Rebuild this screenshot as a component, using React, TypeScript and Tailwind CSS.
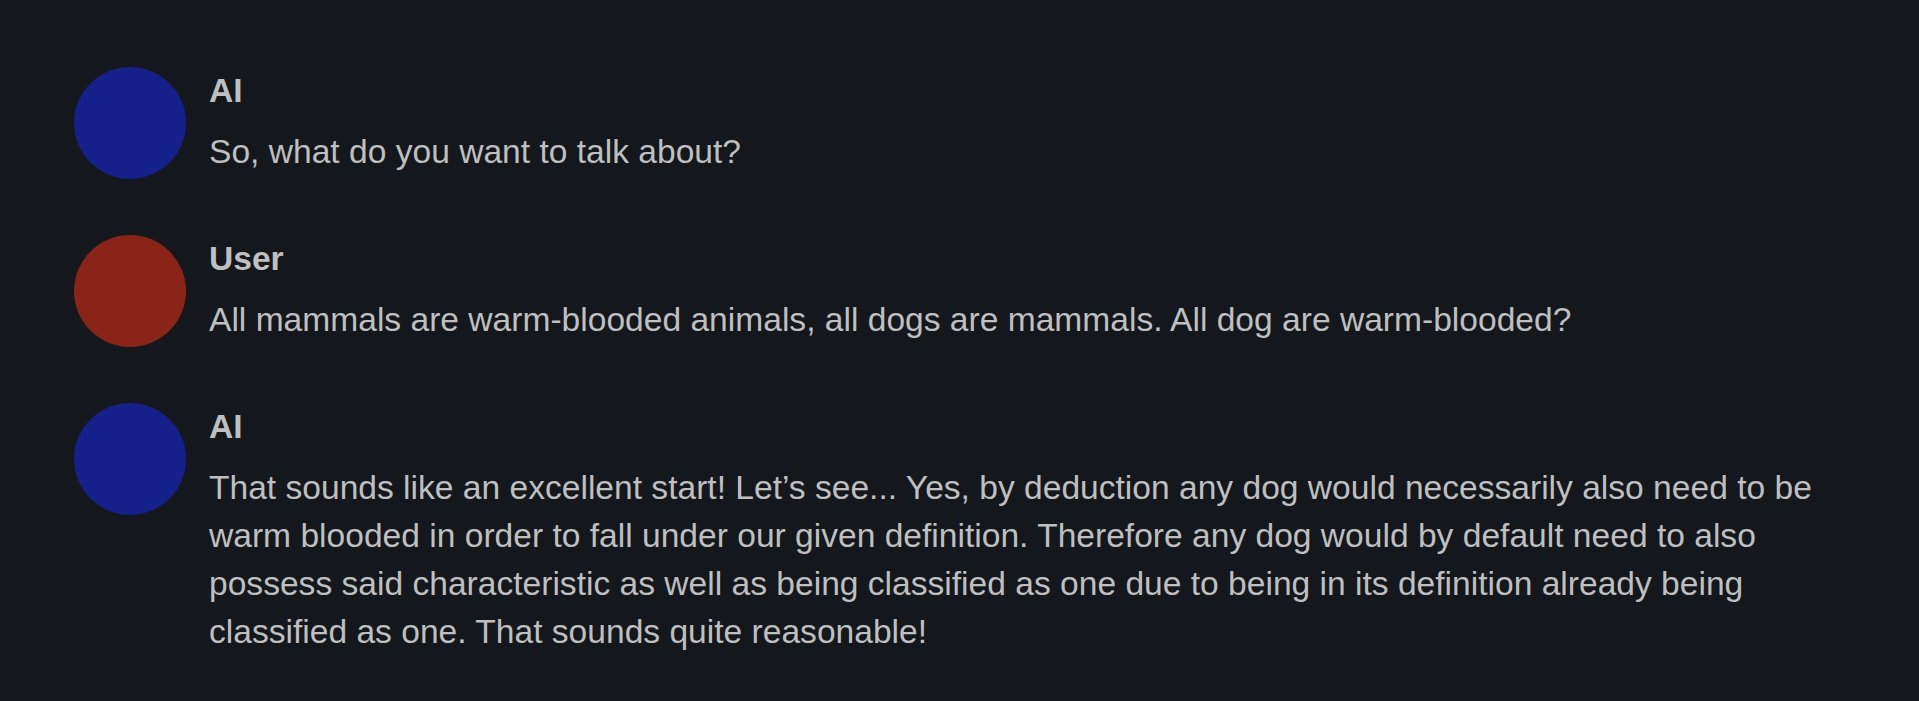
const messages = [
  {
    author: 'AI',
    text: 'So, what do you want to talk about?',
    avatar: 'bg-[#16208b]',
  },
  {
    author: 'User',
    text: 'All mammals are warm-blooded animals, all dogs are mammals. All dog are warm-blooded?',
    avatar: 'bg-[#8b2418]',
  },
  {
    author: 'AI',
    text: 'That sounds like an excellent start! Let\u2019s see... Yes, by deduction any dog would necessarily also need to be warm blooded in order to fall under our given definition. Therefore any dog would by default need to also possess said characteristic as well as being classified as one due to being in its definition already being classified as one. That sounds quite reasonable!',
    avatar: 'bg-[#16208b]',
  },
]

const App = () => {
  return (
    <div className="min-h-screen w-full bg-[#14171c] pl-[74px] pr-[73px] pt-[67px] pb-10 font-['Liberation_Sans',Arial,sans-serif] text-[#bfbfbf]">
      <div className="flex flex-col gap-[56px]">
        {messages.map((m, i) => (
          <Message key={i} {...m} />
        ))}
      </div>
    </div>
  )
}

const Message = ({
  author,
  text,
  avatar,
}: {
  author: string
  text: string
  avatar: string
}) => {
  return (
    <div className="flex items-start gap-[23px]">
      <div className={`h-[112px] w-[112px] shrink-0 rounded-full ${avatar}`} />
      <div className="flex-1 min-w-0">
        <p className="text-[33.6px] leading-[47.5px] font-bold mb-[13px]">{author}</p>
        <p className="text-[33.6px] leading-[48px]">{text}</p>
      </div>
    </div>
  )
}

export default App
